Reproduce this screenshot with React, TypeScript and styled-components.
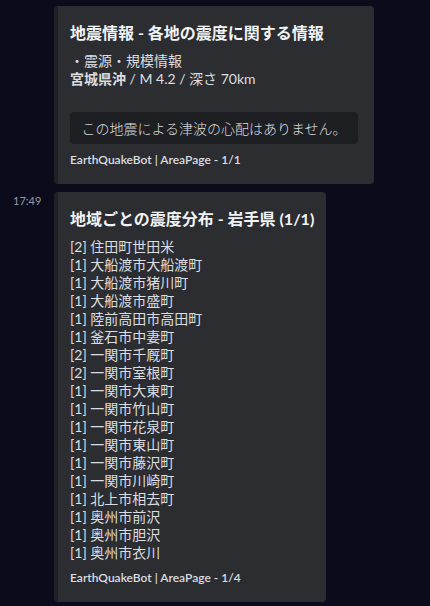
import React from "react";
import styled, { createGlobalStyle } from "styled-components";

const Global = createGlobalStyle`
  html, body { margin: 0; padding: 0; }
  body {
    background: #0c0b1b;
    width: 430px;
    height: 606px;
    overflow: hidden;
    font-family: Lato, "Noto Sans CJK JP", sans-serif;
    color: #dbdee1;
  }
`;

const Page = styled.div`
  display: flex;
  flex-direction: column;
  gap: 8px;
  padding-top: 6px;
`;

const Row = styled.div`
  display: flex;
  align-items: flex-start;
`;

const Gutter = styled.div`
  width: 54px;
  flex: none;
  box-sizing: border-box;
  padding-left: 13px;
  font-size: 11px;
  line-height: 18px;
  color: #949ba4;
`;

const Embed = styled.article<{ $width: number }>`
  box-sizing: border-box;
  width: ${(p) => p.$width}px;
  background: #2b2d31;
  border-left: 4px solid #1f2023;
  border-radius: 4px;
  padding: 8px 16px 16px 12px;
  display: flex;
  flex-direction: column;
`;

const Title = styled.div`
  margin-top: 8px;
  font-size: 16px;
  line-height: 22px;
  font-weight: 700;
  color: #f2f3f5;
  white-space: nowrap;
`;

const Desc = styled.div`
  margin-top: 8px;
  font-size: 14px;
  line-height: 18px;
  color: #dbdee1;
  white-space: nowrap;
`;

const Line = styled.div<{ $blank?: boolean }>`
  height: 18px;
`;

const Strong = styled.strong`
  font-weight: 700;
`;

const Code = styled.pre`
  margin: 6px 0 0;
  background: #1e1f22;
  border-radius: 4px;
  padding: 7px 0;
  font-family: "Noto Sans CJK JP", sans-serif;
  font-size: 14px;
  line-height: 18px;
  font-weight: 300;
  color: #dbdee1;
  text-align: center;
  white-space: nowrap;
`;

const Footer = styled.div`
  margin-top: 8px;
  font-size: 12px;
  line-height: 16px;
  font-weight: 600;
  color: #dbdee1;
  white-space: nowrap;
`;

const areas = [
  "[2] 住田町世田米",
  "[1] 大船渡市大船渡町",
  "[1] 大船渡市猪川町",
  "[1] 大船渡市盛町",
  "[1] 陸前高田市高田町",
  "[1] 釜石市中妻町",
  "[2] 一関市千厩町",
  "[2] 一関市室根町",
  "[1] 一関市大東町",
  "[1] 一関市竹山町",
  "[1] 一関市花泉町",
  "[1] 一関市東山町",
  "[1] 一関市藤沢町",
  "[1] 一関市川崎町",
  "[1] 北上市相去町",
  "[1] 奥州市前沢",
  "[1] 奥州市胆沢",
  "[1] 奥州市衣川",
];

export default function App() {
  return (
    <>
      <Global />
      <Page>
        <Row>
          <Gutter />
          <Embed $width={320}>
            <Title>地震情報 - 各地の震度に関する情報</Title>
            <Desc>
              <Line>・震源・規模情報</Line>
              <Line>
                <Strong>宮城県沖</Strong> / M 4.2 / 深さ 70km
              </Line>
              <Line $blank />
              <Code>この地震による津波の心配はありません。</Code>
            </Desc>
            <Footer>EarthQuakeBot | AreaPage - 1/1</Footer>
          </Embed>
        </Row>
        <Row>
          <Gutter>17:49</Gutter>
          <Embed $width={272}>
            <Title>地域ごとの震度分布 - 岩手県 (1/1)</Title>
            <Desc>
              {areas.map((a) => (
                <Line key={a}>{a}</Line>
              ))}
            </Desc>
            <Footer>EarthQuakeBot | AreaPage - 1/4</Footer>
          </Embed>
        </Row>
      </Page>
    </>
  );
}
